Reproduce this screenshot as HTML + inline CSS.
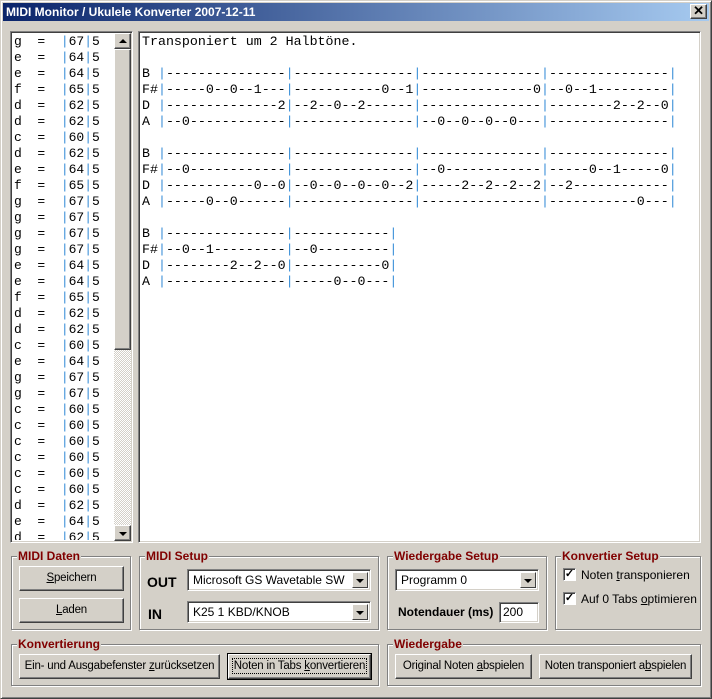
<!DOCTYPE html>
<html><head><meta charset="utf-8"><style>
*{margin:0;padding:0;box-sizing:border-box}
body{width:712px;height:699px;background:#d4d0c8;position:relative;overflow:hidden;font-family:"Liberation Sans",sans-serif;font-size:12px;color:#000}
.a{position:absolute}
.win{left:0;top:0;width:712px;height:699px;border:1px solid;border-color:#d4d0c8 #404040 #404040 #d4d0c8;box-shadow:inset 1px 1px #fff,inset -1px -1px #808080}
.title{left:3px;top:3px;width:706px;height:18px;background:linear-gradient(90deg,#0a246a,#a6caf0);color:#fff;font-weight:bold;font-size:12px;line-height:18px;padding-left:3px}
.sunk{border:1px solid;border-color:#808080 #fff #fff #808080;box-shadow:inset 1px 1px #404040,inset -1px -1px #d4d0c8;background:#fff}
.btn{border:1px solid;border-color:#fff #404040 #404040 #fff;box-shadow:inset -1px -1px #808080;background:#d4d0c8;text-align:center;font-size:11.5px;white-space:nowrap;letter-spacing:-0.2px}
.grp{border:1px solid #808080;box-shadow:1px 1px #fff,inset 1px 1px #fff}
.gl{position:absolute;top:-8px;left:5px;background:#d4d0c8;color:#800000;font-weight:bold;font-size:12px;padding:0 1px;line-height:14px}
.mono{font-family:"Liberation Mono",monospace;font-size:13.3px;line-height:16px;white-space:pre}
.b{color:#3a8fd8}
.dd{position:absolute;right:2px;top:2px;width:16px;height:16px;background:#d4d0c8;border:1px solid;border-color:#fff #404040 #404040 #fff}
.dd:after{content:"";position:absolute;left:3px;top:6px;border:4px solid transparent;border-top:4px solid #000;border-bottom:0}
.cmb{font-size:12px;line-height:20px;padding-left:5px;overflow:hidden;white-space:nowrap}
.cmb span{display:block;overflow:hidden;width:calc(100% - 22px)}
.cb{width:13px;height:13px;background:#fff;border:1px solid;border-color:#808080 #fff #fff #808080;box-shadow:inset 1px 1px #404040;font-size:11px;line-height:11px;text-align:center;font-weight:bold}
u{text-decoration:underline}
</style></head><body>
<div class="a win"></div>
<div class="a title">MIDI Monitor / Ukulele Konverter 2007-12-11</div>
<div class="a btn" style="left:690px;top:4px;width:17px;height:15px;font-weight:bold;font-size:13px;line-height:12px">✕</div>

<div class="a sunk" style="left:10px;top:31px;width:123px;height:512px"></div>
<div class="a mono" id="list" style="left:14px;top:34px;font-size:13px;height:506px;overflow:hidden"></div>
<div class="a" style="left:114px;top:33px;width:17px;height:508px;background:repeating-conic-gradient(#fff 0 25%,#d4d0c8 0 50%) 0 0/2px 2px"></div>
<div class="a btn" style="left:114px;top:33px;width:17px;height:16px"><div style="position:absolute;left:4px;top:5px;border:4px solid transparent;border-bottom:4px solid #000;border-top:0"></div></div>
<div class="a btn" style="left:114px;top:49px;width:17px;height:301px"></div>
<div class="a btn" style="left:114px;top:525px;width:17px;height:16px"><div style="position:absolute;left:4px;top:6px;border:4px solid transparent;border-top:4px solid #000;border-bottom:0"></div></div>

<div class="a sunk" style="left:138px;top:31px;width:563px;height:512px"></div>
<div class="a mono" style="left:142px;top:34px">Transponiert um 2 Halbtöne.

B <span class="b">|</span>---------------<span class="b">|</span>---------------<span class="b">|</span>---------------<span class="b">|</span>---------------<span class="b">|</span>
F#<span class="b">|</span>-----0--0--1---<span class="b">|</span>-----------0--1<span class="b">|</span>--------------0<span class="b">|</span>--0--1---------<span class="b">|</span>
D <span class="b">|</span>--------------2<span class="b">|</span>--2--0--2------<span class="b">|</span>---------------<span class="b">|</span>--------2--2--0<span class="b">|</span>
A <span class="b">|</span>--0------------<span class="b">|</span>---------------<span class="b">|</span>--0--0--0--0---<span class="b">|</span>---------------<span class="b">|</span>

B <span class="b">|</span>---------------<span class="b">|</span>---------------<span class="b">|</span>---------------<span class="b">|</span>---------------<span class="b">|</span>
F#<span class="b">|</span>--0------------<span class="b">|</span>---------------<span class="b">|</span>--0------------<span class="b">|</span>-----0--1-----0<span class="b">|</span>
D <span class="b">|</span>-----------0--0<span class="b">|</span>--0--0--0--0--2<span class="b">|</span>-----2--2--2--2<span class="b">|</span>--2------------<span class="b">|</span>
A <span class="b">|</span>-----0--0------<span class="b">|</span>---------------<span class="b">|</span>---------------<span class="b">|</span>-----------0---<span class="b">|</span>

B <span class="b">|</span>---------------<span class="b">|</span>------------<span class="b">|</span>
F#<span class="b">|</span>--0--1---------<span class="b">|</span>--0---------<span class="b">|</span>
D <span class="b">|</span>--------2--2--0<span class="b">|</span>-----------0<span class="b">|</span>
A <span class="b">|</span>---------------<span class="b">|</span>-----0--0---<span class="b">|</span></div>

<div class="a grp" style="left:11px;top:556px;width:120px;height:74px"><span class="gl">MIDI Daten</span></div>
<div class="a btn" style="left:19px;top:566px;width:105px;height:25px;line-height:23px"><u>S</u>peichern</div>
<div class="a btn" style="left:19px;top:598px;width:105px;height:25px;line-height:23px"><u>L</u>aden</div>

<div class="a grp" style="left:139px;top:556px;width:240px;height:74px"><span class="gl">MIDI Setup</span></div>
<div class="a" style="left:147px;top:574px;font-weight:bold;font-size:14px">OUT</div>
<div class="a" style="left:148px;top:606px;font-weight:bold;font-size:14px">IN</div>
<div class="a sunk cmb" style="left:187px;top:569px;width:184px;height:22px"><span>Microsoft GS Wavetable SW Synth</span><div class="dd"></div></div>
<div class="a sunk cmb" style="left:187px;top:601px;width:184px;height:22px"><span>K25 1 KBD/KNOB</span><div class="dd"></div></div>

<div class="a grp" style="left:387px;top:556px;width:160px;height:74px"><span class="gl">Wiedergabe Setup</span></div>
<div class="a sunk cmb" style="left:395px;top:569px;width:144px;height:22px"><span>Programm 0</span><div class="dd"></div></div>
<div class="a" style="left:398px;top:605px;font-weight:bold;font-size:12px">Notendauer (ms)</div>
<div class="a sunk" style="left:499px;top:602px;width:40px;height:21px;font-size:12px;line-height:19px;padding-left:3px">200</div>

<div class="a grp" style="left:555px;top:556px;width:146px;height:74px"><span class="gl">Konvertier Setup</span></div>
<div class="a cb" style="left:563px;top:568px">✓</div>
<div class="a" style="left:581px;top:568px;white-space:nowrap">Noten <u>t</u>ransponieren</div>
<div class="a cb" style="left:563px;top:592px">✓</div>
<div class="a" style="left:581px;top:592px;white-space:nowrap">Auf 0 Tabs <u>o</u>ptimieren</div>

<div class="a grp" style="left:11px;top:644px;width:368px;height:42px"><span class="gl">Konvertierung</span></div>
<div class="a btn" style="left:19px;top:654px;width:201px;height:25px;line-height:23px">Ein- und Ausgabefenster <u>z</u>urücksetzen</div>
<div class="a" style="left:227px;top:653px;width:145px;height:27px;border:1px solid #000"><div class="btn" style="position:absolute;left:0;top:0;width:143px;height:25px;line-height:23px"><span style="outline:1px dotted #000;outline-offset:1px">Noten in Tabs <u>k</u>onvertieren</span></div></div>

<div class="a grp" style="left:387px;top:644px;width:314px;height:42px"><span class="gl">Wiedergabe</span></div>
<div class="a btn" style="left:395px;top:654px;width:137px;height:25px;line-height:23px">Original Noten <u>a</u>bspielen</div>
<div class="a btn" style="left:539px;top:654px;width:153px;height:25px;line-height:23px">Noten transponiert a<u>b</u>spielen</div>

<script>
var d="g e e f d d c d e f g g g g e e f d d c e g g c c c c c c d e d".split(" ");
var m={g:67,e:64,f:65,d:62,c:60};var h="";
for(var i=0;i<d.length;i++){h+=d[i]+"  =  <span class='b'>|</span>"+m[d[i]]+"<span class='b'>|</span>5\n";}
document.getElementById("list").innerHTML=h;
</script>
</body></html>
